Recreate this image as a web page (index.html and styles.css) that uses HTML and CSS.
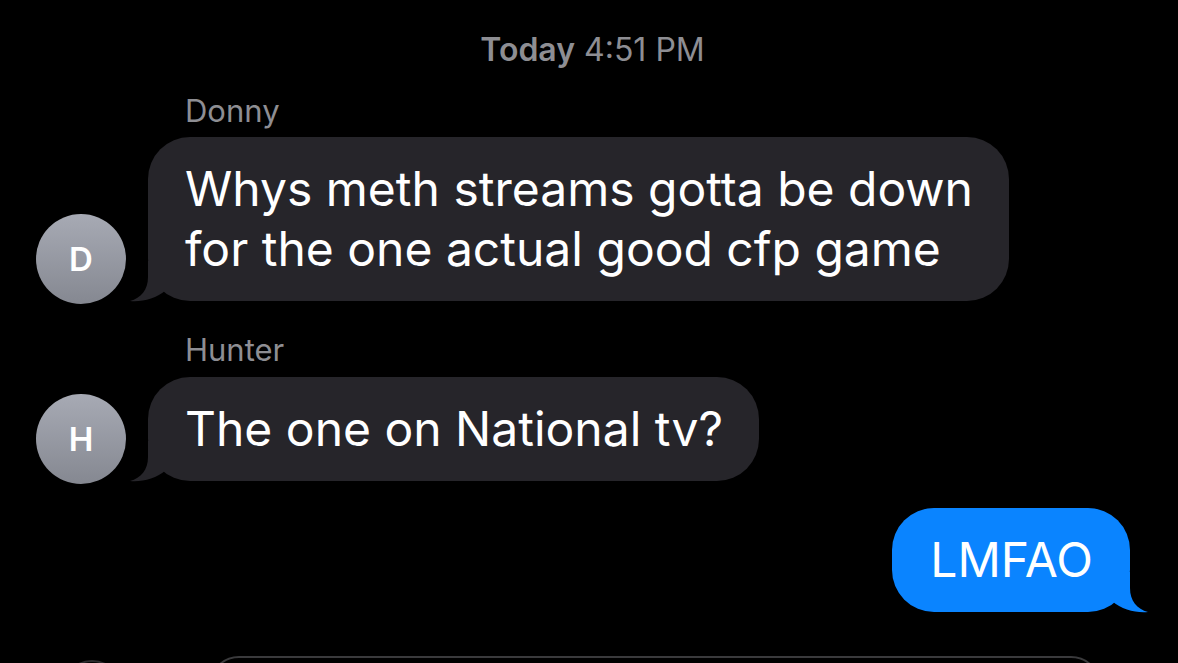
FILE: index.html
```html
<!DOCTYPE html>
<html>
<head>
<meta charset="utf-8">
<link rel="stylesheet" href="styles.css">
</head>
<body>
<div class="thread">
  <div class="stamp"><b>Today</b> 4:51 PM</div>

  <div class="group">
    <div class="sender">Donny</div>
    <div class="row">
      <div class="avatar">D</div>
      <div class="bubble in">Whys meth streams gotta be down<br>for the one actual good cfp game<svg class="tail" viewBox="0 0 40 40" width="40" height="40"><path d="M17,0 L17,16 C17,29 10,37 -1,40 C11,41 25,38 35,29 L35,0 Z"/></svg></div>
    </div>
  </div>

  <div class="group">
    <div class="sender">Hunter</div>
    <div class="row">
      <div class="avatar">H</div>
      <div class="bubble in">The one on National tv?<svg class="tail" viewBox="0 0 40 40" width="40" height="40"><path d="M17,0 L17,16 C17,29 10,37 -1,40 C11,41 25,38 35,29 L35,0 Z"/></svg></div>
    </div>
  </div>

  <div class="row out-row">
    <div class="bubble out">LMFAO<svg class="tail" viewBox="0 0 40 40" width="40" height="40"><path d="M17,0 L17,16 C17,29 10,37 -1,40 C11,41 25,38 35,29 L35,0 Z"/></svg></div>
  </div>

  <div class="composer">
    <div class="plus"></div>
    <div class="field"></div>
  </div>
</div>
</body>
</html>
```

FILE: styles.css
```css
html, body {
  margin: 0;
  padding: 0;
  background: #000;
  width: 1178px;
  height: 663px;
  overflow: hidden;
}
body {
  font-family: Inter, "Liberation Sans", sans-serif;
  color: #fff;
}
.thread {
  display: flex;
  flex-direction: column;
  padding: 30px 31px 0 36px;
}
.stamp {
  text-align: center;
  color: #8e8e93;
  font-size: 32px;
  line-height: 40px;
  margin-left: 2px;
}
.stamp b {
  font-weight: 600;
}
.group {
  display: flex;
  flex-direction: column;
}
.group + .group {
  margin-top: 29px;
}
.sender {
  color: #8e8e93;
  font-size: 31px;
  line-height: 40px;
  margin: 21px 0 6px 149px;
}
.group + .group .sender {
  margin-top: 0;
  margin-bottom: 7px;
}
.row {
  display: flex;
  align-items: flex-end;
  gap: 22px;
}
.avatar {
  width: 90px;
  height: 90px;
  border-radius: 50%;
  background: linear-gradient(#a7aab4, #858891);
  color: #fff;
  font-weight: 600;
  font-size: 33px;
  display: flex;
  align-items: center;
  justify-content: center;
  margin-bottom: -3px;
  flex: none;
}
.bubble {
  position: relative;
  font-size: 48px;
  line-height: 60px;
  padding: 22px 36px 22px 37px;
  border-radius: 42px;
  letter-spacing: 0;
}
.tail {
  position: absolute;
  bottom: 0;
  left: -17px;
  display: block;
  overflow: visible;
}
.bubble.in {
  background: #26252a;
}
.bubble.in .tail path {
  fill: #26252a;
}
.out-row {
  justify-content: flex-end;
  margin-top: 27px;
  padding-right: 17px;
}
.bubble.out {
  background: #0a84ff;
  padding: 22px 37px 22px 38px;
}
.bubble.out .tail {
  left: auto;
  right: -17px;
  transform: scaleX(-1);
}
.bubble.out .tail path {
  fill: #0a84ff;
}
.composer {
  display: flex;
  align-items: flex-start;
  gap: 87px;
  margin-top: 44px;
  margin-left: 26px;
}
.plus {
  width: 56px;
  height: 56px;
  border-radius: 50%;
  border: 2px solid #2c2c2e;
  margin-top: 4px;
  flex: none;
}
.field {
  width: 888px;
  height: 60px;
  border: 2px solid #3a3a3c;
  border-radius: 30px;
}
```
